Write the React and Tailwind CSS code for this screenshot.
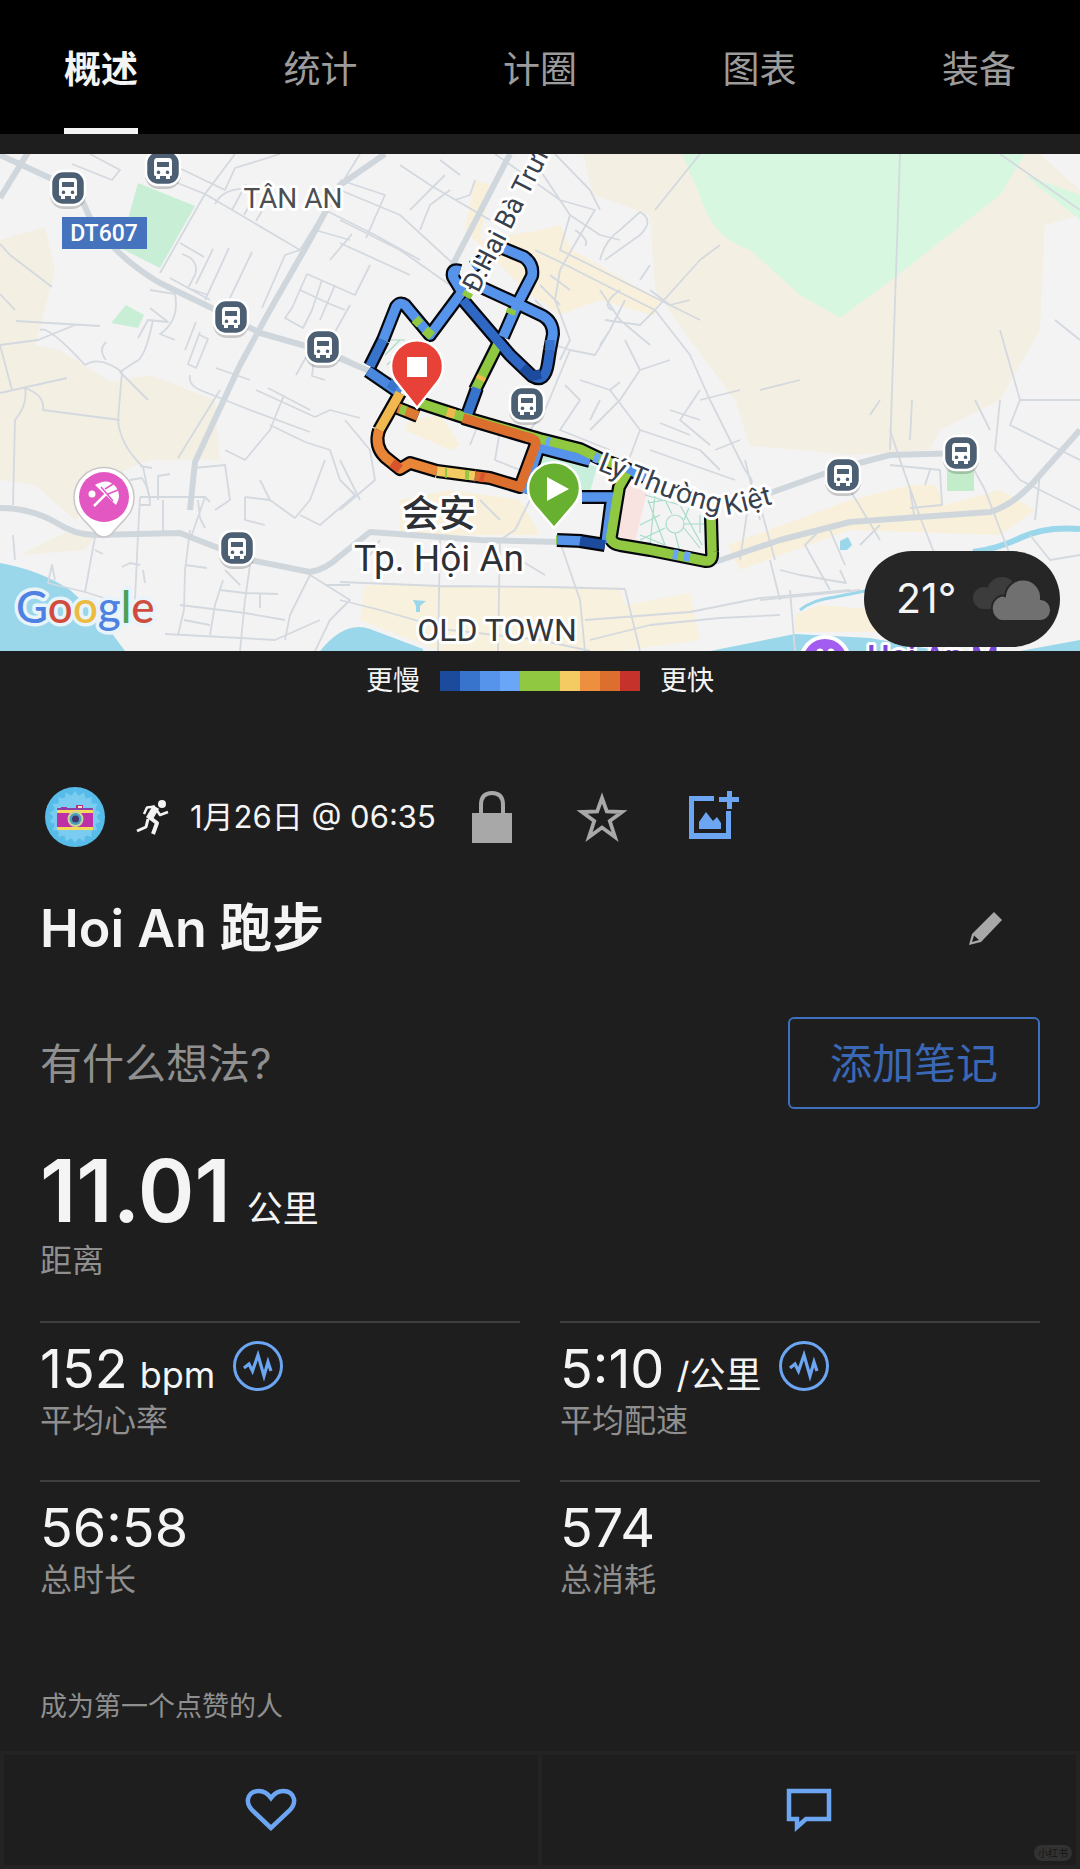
import React from "react";

const TABS = ["概述", "统计", "计圈", "图表", "装备"];

const PACE = [
  "bg-[#1c4a9c]", "bg-[#3874cc]", "bg-[#5594ea]", "bg-[#69a6f7]", "bg-[#90c841]",
  "bg-[#90c841]", "bg-[#f3cb62]", "bg-[#ec9040]", "bg-[#dc6f2e]", "bg-[#c4322b]",
];

const MAJOR_ROADS = [
  "M0 155L50 178L80 196L92 222Q120 260 160 283L220 312L260 333L320 350L400 384",
  "M0 198L32 146M385 154L340 185L310 240L270 310L240 365L195 462L190 510",
  "M0 508Q30 508 55 522Q75 535 95 535L180 533Q210 545 250 560L310 572Q325 570 340 556L370 532L480 540L560 542",
  "M510 154L450 270M715 562L780 540L850 522L920 517L990 512Q1015 505 1040 475L1080 430",
  "M770 493L840 468L890 455L965 453",
];

const MINOR_ROADS = [
  "M90 154L120 170L112 180L72 164M170 180L205 194L235 154M205 194L160 273M205 194L300 250L285 255L262 308M150 154L225 190L235 168L280 154",
  "M215 204Q225 185 255 190M232 210L246 184M244 215L258 190M256 221L270 197M180 243L204 257M182 254Q200 260 195 275L188 288L208 295M213 249L196 284M229 248L205 300M252 252L230 298M170 278L210 300M150 290L175 294Q180 320 160 334L175 340M0 244L10 255L52 287M0 294L15 310M16 321L100 326M0 345L38 340L75 325M40 330Q48 325 85 365Q100 355 122 372L118 420Q120 445 143 467L150 500M150 308L168 322L148 320L138 338M153 320Q145 360 135 362L120 372L148 400M106 342Q98 350 106 360M0 345L12 390M0 393L67 378M25 388Q28 405 15 420L13 505M25 388Q45 395 43 410L120 420",
  "M196 322L185 350M200 332L188 364L196 368L208 339L200 335M190 375Q188 385 200 390L250 410L310 432M216 368L250 380M220 390L178 458M256 390L315 417L330 410L360 418M284 395L270 430L245 460L225 450M268 388L310 410",
  "M307 274L292 308L285 318L303 328L312 310L322 280M307 274L355 295L370 265M300 290L330 304L345 310M320 320L335 285M350 305L325 350M310 350L296 375M340 355L410 390M315 350L312 376L325 380",
  "M300 250L325 210L375 235L420 260M325 210L360 154M315 230L350 240M352 234L330 260M340 190L400 215L460 270M340 220L400 250L450 285M340 243L410 275M366 238L385 195L340 180M420 230L430 205L450 190M410 210L445 175M400 165L430 185L490 220M440 160L460 175M475 180L470 195L455 200",
  "M495 154L560 200L595 210L580 235L560 270L555 300L570 340L560 360M540 170L570 215L600 235L620 240M555 154L590 190L600 210M570 215L560 250L600 270L650 295L700 320M535 250L560 262L615 290L655 310M575 230Q590 240 585 246M600 260Q605 240 620 230L640 212Q655 220 640 235L605 260M655 210L700 154M655 310L700 260L720 245M655 310L690 355L710 400L745 470L752 480",
  "M620 290Q600 305 612 310M540 285L560 305M550 275L570 290M535 300L555 320M600 290L620 320L650 345M605 320L640 325L655 310M610 330L600 345M625 300L610 330L595 355L570 350L555 345M570 350L545 410L530 430M625 340L640 370L620 400L590 430M580 380L610 390L620 382M640 370L670 360M650 290L670 305L690 300M640 280L650 265",
  "M565 385L580 400L560 430L610 450M600 400L590 420M610 390L640 430L625 470M640 430L700 450L720 470M660 423L690 435M670 410L700 420M700 390L680 420L710 445M715 450L740 440M650 450L735 480",
  "M140 466L152 468M130 480L142 478Q150 490 150 505L140 505M140 497L205 497L210 502M158 500L158 476L170 474M190 530L185 570L184 610L178 635M205 497L190 540M198 500L200 518L205 528M140 497L138 535M163 500L163 532M95 537L85 592M138 535L135 600M194 468L225 465L230 500L215 510M245 497L270 500L295 518L310 500L325 460M245 497L245 520L265 525M270 500L260 480M300 515L320 525L355 495L340 480L330 450L305 442L270 425",
  "M223 580L215 605L210 635M250 565L245 600L240 651M185 565L207 568M180 605L245 613L285 620M220 590L245 593L278 594M260 593L260 608M184 620L210 625M165 634L240 638L275 640L320 620M240 585L225 570M310 575L290 615L285 640M310 575L350 600L330 620L315 651M325 585L350 585M55 580L52 565L48 583L85 592L110 600M13 535L15 560M95 550L103 554M122 567L130 563L140 565M143 570L145 583",
  "M340 582L440 586L550 587L625 589M340 600L380 610L450 630L540 640L590 651M380 540L360 570M440 540L438 651M500 540L498 651M560 542L580 600L585 651M625 589L640 651M520 560L545 575M530 500L515 530L500 540M480 500L500 520M585 620L690 612L760 598L850 590M590 640L650 625L720 618L780 615M345 420L370 450L375 480L340 510M340 460L360 500M480 420L470 445M500 430L495 460L520 470",
  "M752 480L740 560M770 560L780 600M760 505L775 560M745 460L760 520M840 570L846 583L800 575L780 570M830 530L845 565M850 490L880 540M920 517L935 555M890 430L900 460L920 517M910 440L912 400M965 453L985 490L1010 555M990 430L975 400M890 465L940 470L942 505L910 508M910 490L915 520M930 470L925 485M880 400L870 415M1000 400L995 450L1020 480L1050 495L1080 510M1030 535L1050 560L1080 555M1040 475L1035 520",
  "M1020 400L1010 425L1060 450L1080 460M900 154L890 450M760 390L800 380M700 400L740 390M820 530L805 545L830 590M790 590L795 651M760 600L860 590M880 525L860 545M1000 154L1080 210M1055 320L1080 340M1000 330L1020 400L1080 400",
];

const BUSES = [[68, 188], [163, 168], [231, 317], [323, 347], [527, 404], [237, 548], [843, 475], [961, 453]];

const ROUTE = [
  ["#4a88e0", "M400 393L368 371"],
  ["#3874cc", "M370 366L383 340"],
  ["#5594ea", "M383 340L396 307Q400 301 405 305L430 335L462 292L453 277Q451 268 460 271"],
  ["#5594ea", "M473 267L500 247L524 257Q534 264 532 276L518 303L503 337"],
  ["#90c841", "M500 340L475 390"],
  ["#3874cc", "M477 388L466 418"],
  ["#5594ea", "M483 288L520 305L543 316Q553 322 553 334L550 350"],
  ["#2f68c4", "M550 350L548 363Q545 384 532 376L510 355L463 300"],
  ["#5594ea", "M541 440L524 493M541 448L590 461M582 497L612 497L606 543"],
  ["#90c841", "M420 403L463 417L540 439L580 449L603 460L620 466"],
  ["#5594ea", "M620 466L645 477"],
  ["#f0b84e", "M400 393L379 430"],
  ["#e98537", "M379 430Q374 446 385 457L400 469L410 463L437 471"],
  ["#f3cb62", "M437 471L475 476"],
  ["#dc6f2e", "M475 476L490 478L520 487L536 444Q536 439 527 437L463 418"],
  ["#dc7a33", "M398 408L418 416"],
  ["#5594ea", "M557 540L582 541"],
  ["#1c4a9c", "M580 541L605 545"],
  ["#90c841", "M627 473L619 487L611 536Q610 543 620 545L650 550L705 561Q713 562 712 552L711 517"],
];

const ROUTE_MARKS = [
  ["#69a6f7", "M673 554L678 555M684 556L690 557"],
  ["#69a6f7", "M546 441L550 442M594 457L599 459"],
  ["#90c841", "M415 319L420 324M425 330L432 336M510 314L512 309M466 297L469 292M556 540L557 540"],
  ["#f0b84e", "M447 412L455 414M480 380L482 376"],
  ["#90c841", "M457 414L461 416M465 475L469 475M445 473L447 473"],
  ["#90c841", "M400 409L406 411"],
  ["#3874cc", "M550 340L550 350M397 388L389 383"],
  ["#1c4a9c", "M523 367L532 376L541 374"],
  ["#d9532c", "M392 463L400 469M480 477L484 478"],
];

function BusStop({ x, y }) {
  return (
    <g transform={`translate(${x} ${y})`}>
      <rect x="-18" y="-15" width="36" height="36" rx="14" fill="#000" opacity=".18" />
      <rect x="-17" y="-17" width="34" height="34" rx="12" fill="#4d6073" stroke="#fff" strokeWidth="2.5" />
      <path fill="#fff" fillRule="evenodd" d="M-6-10H6Q9-10 9-6V7Q9 8 7 8V11H3V8H-3V11H-7V8Q-9 8-9 7V-6Q-9-10-6-10ZM-6-6V-1H6V-6ZM-4.500 2.500a1.800 1.800 0 1 0 .01 0ZM4.500 2.500a1.800 1.800 0 1 0 .01 0Z" />
    </g>
  );
}

function RouteMap() {
  const halo = { stroke: "#fff", strokeWidth: 6, strokeLinejoin: "round", paintOrder: "stroke" };
  return (
    <svg viewBox="0 154 1080 497" className="block w-full" role="img" aria-label="Hoi An 路线">
      <rect y="154" width="1080" height="497" fill="#f4f3f4" />
      <g fill="#f4efe3">
        <path d="M0 240L45 227L55 270L42 320L35 345L60 350L110 382L150 375L215 400L220 460L150 460L125 470L75 520L35 485L0 480Z" />
        <path d="M20 555L70 530L95 537L85 550Z" />
        <path d="M583 154H1040L1080 190V215L1045 225L1040 330L1000 400L940 430L930 450L850 455L800 450L750 446L735 400L690 340L655 290L650 215L593 195Z" />
        <path d="M475 180L490 185L480 240L540 230L560 225L572 250L660 300L655 316L600 300L560 315L525 290L465 230Z" fill="#f8f0da" />
        <path d="M365 585L620 587L625 605L690 593L700 640L620 651H440L360 620Z" fill="#f7f1de" />
        <path d="M728 545L850 500L910 485L935 485L945 505L1000 490L1035 510L1000 535L850 530L740 570Z" fill="#f8f0da" />
        <path d="M795 615L820 605L880 610L885 632L795 632Z" fill="#f8f0da" />
        <path d="M410 420L440 415L460 445L450 450L405 430ZM400 500L450 490L520 500L540 535L400 535Z" fill="#f8f0da" />
      </g>
      <g fill="#d8f7e1">
        <path d="M682 154L708 215Q720 240 750 250L800 295L840 318L885 285L1000 195L1025 154Z" />
        <path d="M1025 175L1080 195V220Z" />
        <path d="M138 183L195 206L160 268L120 248Z" fill="#c8efd5" />
        <path d="M111 323L126 305L144 315L138 328Z" fill="#c8efd5" />
        <path d="M947 470H974V491H947Z" fill="#c3edca" />
        <path d="M541 450L597 467L590 492L530 490Z" fill="#c8efdb" />
      </g>
      <path d="M627 485L647 492L635 541L616 536Z" fill="#f8e3e1" />
      <g fill="#9ad7ea">
        <path d="M0 563Q40 570 70 590Q100 615 125 651H0Z" />
        <path d="M320 651Q345 620 370 629L423 649V651Z" />
        <path d="M710 651L795 634L870 638L940 651ZM1020 651L1080 640V651Z" />
        <path d="M413 600L426 601L420 606V612H416V606ZM840 541L848 537L852 545L847 550L840 550Z" />
      </g>
      <path d="M973 552Q1000 548 1020 538Q1045 526 1080 529" fill="none" stroke="#9ad7ea" strokeWidth="6" />
      <path d="M800 610Q812 600 835 597L870 590" fill="none" stroke="#9ad7ea" strokeWidth="3" />
      <g fill="none" stroke="#d3d9df" strokeWidth="1.8" strokeLinejoin="round">
        {MINOR_ROADS.map((d) => <path key={d} d={d} />)}
      </g>
      <g fill="none" stroke="#cfd7dd" strokeWidth="6" strokeLinejoin="round">
        {MAJOR_ROADS.map((d) => <path key={d} d={d} />)}
      </g>
      <g fill="none" stroke="#a7dcc8" strokeWidth="1.200">
        <circle cx="675" cy="524" r="9" />
        <path d="M645 495L680 505L702 545M640 540L665 528M684 524H705M700 515V533M648 500L665 545L640 535M655 495L650 545M672 514L665 500L648 503M690 505L684 520M640 525L660 515M675 533L680 552M684 528L700 548" />
        <path d="M385 355L400 340M387 365L402 350M390 340H405" />
      </g>

      <g fill="none" stroke="#05070c" strokeWidth="14" strokeLinejoin="round">
        {ROUTE.map(([, d]) => <path key={d} d={d} />)}
      </g>
      <g fill="none" strokeWidth="9.500" strokeLinejoin="round">
        {ROUTE.map(([c, d]) => <path key={d} d={d} stroke={c} />)}
        {ROUTE_MARKS.map(([c, d]) => <path key={d} d={d} stroke={c} />)}
      </g>

      {BUSES.map(([x, y]) => <BusStop key={x} x={x} y={y} />)}

      <path d="M104 537Q98 537 94 531L82 518A30 30 0 1 1 126 518L114 531Q110 537 104 537Z" fill="#fff" stroke="#c9c6c8" strokeWidth="1.500" />
      <circle cx="104" cy="497" r="25" fill="#e357c2" />
      <g transform="translate(104 497)">
        <circle cx="-12" cy="-3" r="3.500" fill="#fff" />
        <path d="M-10 9L2-3" stroke="#fff" strokeWidth="2.500" />
        <path d="M-9-12Q4-20 12-10Q18-2 12 8Z" fill="#fff" />
        <path d="M-3-10L9 4M1-8L9-13M4-3L14-7" stroke="#e357c2" strokeWidth="1.500" fill="none" />
      </g>

      <path d="M417 408L398 384A26 26 0 1 1 436 384Z" fill="#e84138" stroke="#fff" strokeWidth="2.500" />
      <rect x="407" y="357" width="20" height="20" fill="#fff" />
      <path d="M554 528L535 506A26 26 0 1 1 573 506Z" fill="#67b030" stroke="#fff" strokeWidth="2.500" />
      <path d="M547 477L569 489L547 501Z" fill="#fff" />

      <rect x="62" y="217" width="85" height="32" fill="#4573bd" />
      <g fontFamily="Roboto, 'Noto Sans CJK SC', sans-serif">
        <text x="104" y="241" textAnchor="middle" fontSize="23" fontWeight="500" fill="#fff">DT607</text>
        <text x="293" y="208" textAnchor="middle" fontSize="28" fill="#4c4f52" {...halo}>TÂN AN</text>
        <text x="439" y="527" textAnchor="middle" fontSize="37" fontWeight="500" fill="#2d3035" {...halo}>会安</text>
        <text x="439" y="571" textAnchor="middle" fontSize="37" fill="#2d3035" {...halo}>Tp. Hội An</text>
        <text x="497" y="641" textAnchor="middle" fontSize="32" fill="#33363b" {...halo}>OLD TOWN</text>
        <text transform="translate(478 294) rotate(-63)" fontSize="27" fill="#36404e" {...halo}>Đ.Hai Bà Trưng</text>
        <path id="ly-thuong-kiet" d="M597 470L640 487Q710 515 732 514Q745 512 800 496" fill="none" />
        <text fontSize="28" fill="#36404e" {...halo}>
          <textPath href="#ly-thuong-kiet">Lý Thường Kiệt</textPath>
        </text>
        <circle cx="825" cy="661" r="24" fill="#a25cf0" stroke="#fff" strokeWidth="4" />
        <circle cx="820" cy="652" r="3.500" fill="#fff" />
        <circle cx="831" cy="652" r="3.500" fill="#fff" />
        <text x="867" y="667" fontSize="32" fontWeight="500" fill="#7b45d6" {...halo}>Hoi An M</text>
      </g>
      <text x="16" y="623" fontSize="44" fontWeight="500" fontFamily="Lato, sans-serif" stroke="#e8f4fa" strokeWidth="7" strokeLinejoin="round" paintOrder="stroke">
        <tspan fill="#4f81e2">G</tspan><tspan fill="#cf4c3f">o</tspan><tspan fill="#edbb41">o</tspan><tspan fill="#4f81e2">g</tspan><tspan fill="#4ba05a">l</tspan><tspan fill="#cf4c3f">e</tspan>
      </text>
    </svg>
  );
}

function Clouds() {
  return (
    <svg width="80" height="46" viewBox="0 0 80 46" aria-hidden="true">
      <g fill="#3c3c3c"><circle cx="12" cy="22" r="11" /><circle cx="30" cy="16" r="15" /><path d="M12 14H40V33H12Z" /></g>
      <path d="M29 45A12 13 0 0 1 28 20Q31 19 33 20A18 18 0 0 1 69 23A11 11 0 0 1 67 45Z" fill="#707070" stroke="#262626" strokeWidth="2" />
    </svg>
  );
}

function Avatar() {
  const rays = Array.from({ length: 18 }, (_, i) => i * 20);
  return (
    <svg width="60" height="60" viewBox="0 0 60 60" className="shrink-0" role="img" aria-label="头像">
      <circle cx="30" cy="30" r="30" fill="#58bcea" />
      <circle cx="30" cy="30" r="22" fill="#7accf0" />
      {rays.map((a) => <path key={a} d="M26.500 9L30 4L33.500 9Z" fill="#7accf0" transform={`rotate(${a} 30 30)`} />)}
      <path d="M31 18h7v6h-7zM16 20h6v3h-6z" fill="#b52f9d" />
      <rect x="33" y="19" width="4" height="4" fill="#f5e9a6" />
      <rect x="12" y="21" width="36" height="5" rx="1" fill="#8b3fa8" />
      <rect x="12" y="23" width="36" height="3" fill="#f4d95a" />
      <rect x="12" y="26" width="36" height="15" fill="#bf2fa6" />
      <rect x="12" y="40" width="36" height="3" fill="#f4d95a" />
      <circle cx="30.500" cy="32" r="8" fill="#c8d6a0" />
      <circle cx="30.500" cy="32" r="6" fill="#4d9fb9" />
      <circle cx="30.500" cy="32" r="3.500" fill="#43356f" />
    </svg>
  );
}

function Runner() {
  return (
    <svg width="34" height="36" viewBox="0 0 34 36" className="shrink-0" aria-hidden="true">
      <circle cx="26" cy="5" r="4" fill="#f4f4f4" />
      <g fill="none" stroke="#f4f4f4" strokeLinejoin="round">
        <path d="M20 8L13 20" strokeWidth="7" />
        <path d="M8 15L11 8.500L19 7.500M20 10L24 16L32 13" strokeWidth="2.500" />
        <path d="M13 18L21 24L17 35" strokeWidth="4" />
        <path d="M12 20L10 28L1 32" strokeWidth="3" />
      </g>
    </svg>
  );
}

function Pulse() {
  return (
    <svg width="50" height="50" viewBox="0 0 50 50" className="shrink-0" fill="none" stroke="#6ca6f3" role="img" aria-label="图表">
      <circle cx="25" cy="25" r="23.500" strokeWidth="3" />
      <path d="M11 27L16 23L19.500 30L25 14L31 35L35 21L38 30" strokeWidth="3.200" strokeLinejoin="miter" />
    </svg>
  );
}

function Stat({ value, unit, label, pulse }) {
  return (
    <div className="h-[159px] border-t-2 border-[#3f3f3f] pt-[18px]">
      <div className="flex h-14 items-start gap-[18px]">
        <span className="flex items-baseline gap-3 text-[54px] leading-14">
          {value}
          {unit && <span className="text-[36px] leading-10">{unit}</span>}
        </span>
        {pulse && <Pulse />}
      </div>
      <div className="mt-1 text-[32px] leading-10 text-[#8f8f8f]">{label}</div>
    </div>
  );
}

export default function App() {
  return (
    <div className="flex min-h-screen flex-col bg-[#1e1e1e] text-[#f4f4f4] font-['Inter','Noto_Sans_CJK_SC',sans-serif]">
      <nav className="flex justify-between bg-black px-16">
        {TABS.map((t, i) => (
          <button
            key={t}
            className={
              i === 0
                ? "h-[134px] border-b-[6px] border-[#f4f4f4] pt-3 text-[37px] font-semibold"
                : "h-[134px] border-b-[6px] border-transparent pt-3 text-[37px] text-[#9c9c9c]"
            }
          >
            {t}
          </button>
        ))}
      </nav>

      <section className="relative mt-5">
        <RouteMap />
        <div className="absolute right-5 bottom-1 flex h-24 w-[196px] items-center justify-between rounded-full bg-[#262626] pr-2 pl-8">
          <span className="text-[41px]">21°</span>
          <Clouds />
        </div>
      </section>

      <div className="flex h-[60px] items-center justify-center gap-5 text-[27px]">
        <span>更慢</span>
        <div className="flex h-5">
          {PACE.map((c, i) => <span key={i} className={`w-5 ${c}`} />)}
        </div>
        <span>更快</span>
      </div>

      <main className="px-10">
        <div className="mt-[76px] flex h-[60px] items-center pl-[5px]">
          <Avatar />
          <div className="ml-[31px]"><Runner /></div>
          <span className="ml-5 text-[31px] whitespace-nowrap">1月26日 @ 06:35</span>
          <button aria-label="隐私" className="ml-9">
            <svg width="40" height="52" viewBox="0 0 40 52">
              <path d="M0 22H40V52H0Z" fill="#a8a8a8" />
              <path d="M9 24V14Q9 2 20 2T31 14V24" fill="none" stroke="#a8a8a8" strokeWidth="4" />
            </svg>
          </button>
          <button aria-label="收藏" className="ml-16">
            <svg width="52" height="52" viewBox="0 0 52 52">
              <path d="M26 7L30.800 20.500L46 21L33.800 30L39 46L26 36.500L13 46L18.200 30L6 21L21.200 20.500Z" fill="none" stroke="#a8a8a8" strokeWidth="3.800" />
            </svg>
          </button>
          <button aria-label="添加照片" className="ml-15">
            <svg width="52" height="52" viewBox="0 0 52 52" fill="#6ca6f3">
              <path d="M26 5V10H6V42H38V20H43V48H1V5Z" />
              <path d="M39 -1H44V6H51V11H44V18H39V11H31V6H39Z" />
              <path d="M11 38V31L18 21L25 30L29 26L33 32V38Z" />
            </svg>
          </button>
        </div>

        <div className="mt-[42px] flex items-center justify-between pr-9">
          <h1 className="text-[52px] leading-20 font-semibold">Hoi An 跑步</h1>
          <button aria-label="编辑">
            <svg width="36" height="36" viewBox="0 0 36 36">
              <path d="M26 1L34 9L13 31L1 34L4 23Z" fill="#a8a8a8" />
              <path d="M6 24.500L11 29L4 31Z" fill="#1e1e1e" />
            </svg>
          </button>
        </div>

        <div className="mt-12 flex items-center justify-between">
          <p className="text-[42px] text-[#8f8f8f]">有什么想法?</p>
          <button className="h-[92px] rounded-md border-2 border-[#3f70bf] px-10 text-[42px] text-[#3a68b6]">添加笔记</button>
        </div>

        <div className="mt-8 flex items-baseline gap-4">
          <span className="text-[86px] leading-25 font-semibold">11.01</span>
          <span className="text-[36px]">公里</span>
        </div>
        <div className="text-[32px] leading-10 text-[#8f8f8f]">距离</div>

        <div className="mt-10 grid grid-cols-2 gap-x-10">
          <Stat value="152" unit="bpm" label="平均心率" pulse />
          <Stat value="5:10" unit="/公里" label="平均配速" pulse />
          <Stat value="56:58" label="总时长" />
          <Stat value="574" label="总消耗" />
        </div>

        <p className="mt-12 text-[27px] leading-10 text-[#8f8f8f]">成为第一个点赞的人</p>
      </main>

      <footer className="relative mt-6 grid grow grid-cols-2 gap-1 border-4 border-[#232323] bg-[#232323]">
        <button aria-label="点赞" className="flex items-center justify-center bg-[#1e1e1e]">
          <svg width="52" height="44" viewBox="0 0 52 44">
            <path d="M26 40L8 23Q2 17 3 11Q5 3 14 3Q21 3 26 10Q31 3 38 3Q47 3 49 11Q50 17 44 23Z" fill="none" stroke="#6ca6f3" strokeWidth="4.500" />
          </svg>
        </button>
        <button aria-label="评论" className="flex items-center justify-center bg-[#1e1e1e]">
          <svg width="46" height="44" viewBox="0 0 46 44">
            <path d="M3 3H43V31H20L11 39V31H3Z" fill="none" stroke="#6ca6f3" strokeWidth="4.500" />
          </svg>
        </button>
        <span className="absolute right-1 bottom-1 rounded-full bg-[#323232] px-1 text-[10px] leading-4 text-[#161616]">小红书</span>
      </footer>
    </div>
  );
}
